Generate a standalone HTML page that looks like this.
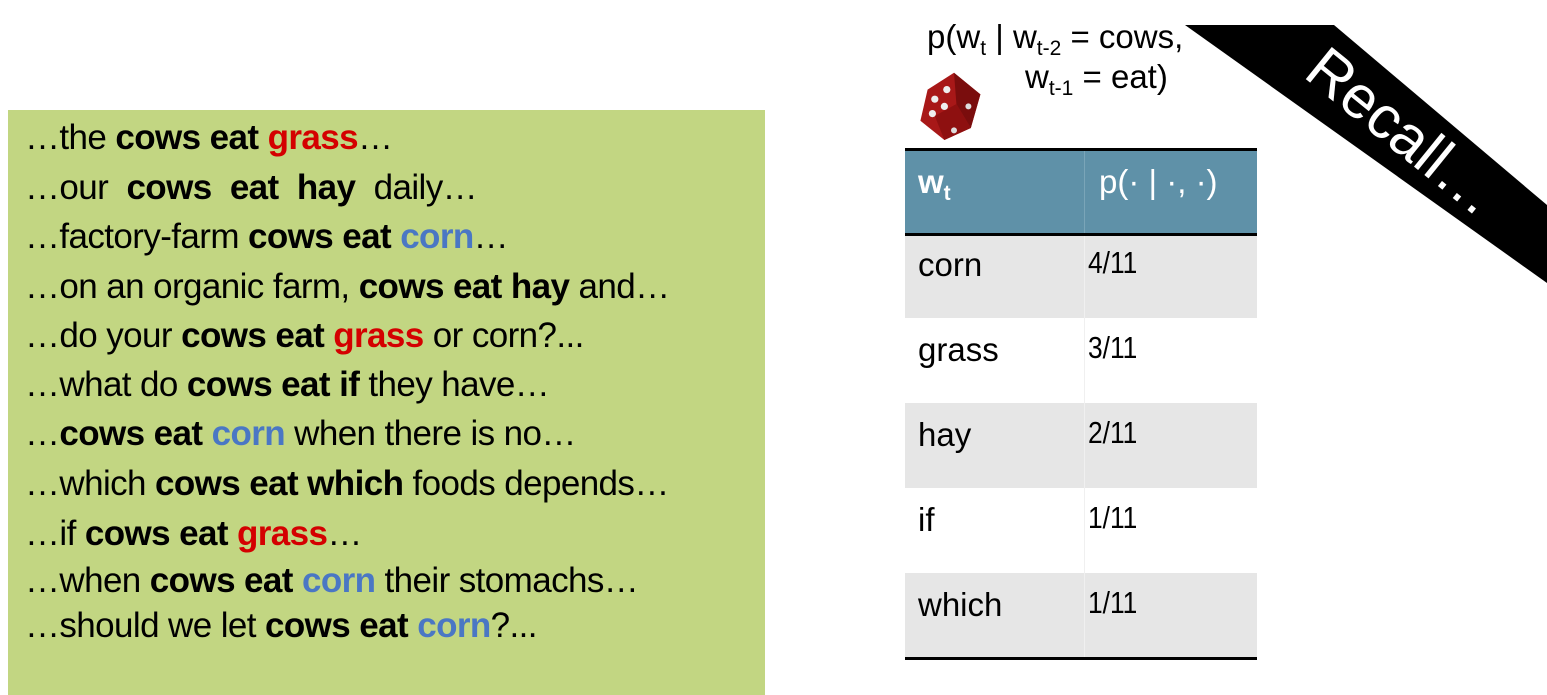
<!DOCTYPE html>
<html><head><meta charset="utf-8"><style>
body{margin:0;width:1547px;height:695px;background:#fff;position:relative;overflow:hidden;font-family:"Liberation Sans",sans-serif;}
.g{position:absolute;left:8px;top:110px;width:757px;height:585px;background:#c2d682;}
.l{position:absolute;left:25px;font-size:35px;letter-spacing:-0.6px;white-space:nowrap;line-height:40px;color:#000;}
b{font-weight:bold}
.r{color:#d40000}.bl{color:#4a77c4}
.t{position:absolute;font-size:33px;white-space:nowrap;line-height:38px;}
sub{font-size:21px;vertical-align:-7px;line-height:0}
.row{position:absolute;left:905px;width:352px;height:85px;}
.cell{position:absolute;font-size:33px;line-height:38px;}
.num{position:absolute;left:1088px;font-size:31px;line-height:36px;transform:scaleX(0.85);transform-origin:left;}
</style></head><body>
<div class="g"></div>
<div class="l" style="top:118px">…the <b>cows eat <span class="r">grass</span></b>…</div>
<div class="l" style="top:168px">…our &nbsp;<b>cows &nbsp;eat &nbsp;hay</b> &nbsp;daily…</div>
<div class="l" style="top:217px">…factory-farm <b>cows eat <span class="bl">corn</span></b>…</div>
<div class="l" style="top:267px">…on an organic farm, <b>cows eat hay</b> and…</div>
<div class="l" style="top:316px">…do your <b>cows eat <span class="r">grass</span></b> or corn?...</div>
<div class="l" style="top:365px">…what do <b>cows eat if</b> they have…</div>
<div class="l" style="top:414px">…<b>cows eat <span class="bl">corn</span></b> when there is no…</div>
<div class="l" style="top:464px">…which <b>cows eat which</b> foods depends…</div>
<div class="l" style="top:514px">…if <b>cows eat <span class="r">grass</span></b>…</div>
<div class="l" style="top:561px">…when <b>cows eat <span class="bl">corn</span></b> their stomachs…</div>
<div class="l" style="top:606px">…should we let <b>cows eat <span class="bl">corn</span></b>?...</div>

<div class="t" style="left:927px;top:18px">p(w<sub>t</sub> | w<sub>t-2</sub> = cows,</div>
<div class="t" style="left:1025px;top:58px">w<sub>t-1</sub> = eat)</div>

<svg style="position:absolute;left:0;top:0" width="1547" height="695">
<polygon points="1185,25 1334,25 1547,205 1547,283" fill="#000"/>
<text x="0" y="0" font-family="Liberation Sans" font-size="60" fill="#fff" transform="translate(1302,76) rotate(39)">Recall…</text>
<g transform="translate(918,68) scale(1.2)">
<polygon points="8,18 30,4 52,22 44,50 22,60 2,44" fill="#a81818"/>
<polygon points="30,4 52,22 44,50 32,30" fill="#7a0d0d"/>
<polygon points="22,60 44,50 32,30 14,40" fill="#8e1010"/>
<circle cx="14" cy="26" r="3" fill="#eee"/><circle cx="24" cy="18" r="3" fill="#eee"/>
<circle cx="12" cy="38" r="3" fill="#eee"/><circle cx="22" cy="32" r="3" fill="#eee"/>
<circle cx="42" cy="32" r="2.5" fill="#ddd"/><circle cx="30" cy="52" r="2.5" fill="#ddd"/>
</g>
</svg>

<div class="row" style="top:148px;height:85px;background:#5f91a8;border-top:3px solid #000;box-sizing:border-box"></div>
<div style="position:absolute;left:1084px;top:151px;width:1px;height:82px;background:#7aa5b8"></div>
<div class="cell" style="left:918px;top:163px;color:#fff;font-weight:bold">w<sub>t</sub></div>
<div class="cell" style="left:1099px;top:163px;color:#fff">p(· | ·, ·)</div>
<div class="row" style="top:233px;background:#e6e6e6;border-top:3px solid #000;box-sizing:border-box"></div>
<div class="row" style="top:318px;background:#fff"></div>
<div class="row" style="top:403px;background:#e6e6e6"></div>
<div class="row" style="top:488px;background:#fff"></div>
<div class="row" style="top:573px;background:#e6e6e6;height:84px"></div>
<div style="position:absolute;left:905px;top:657px;width:352px;height:3px;background:#000"></div>
<div style="position:absolute;left:1084px;top:236px;width:1px;height:421px;background:#f0f0f0"></div>
<div class="cell" style="left:918px;top:246px">corn</div><div class="num" style="top:245px">4/11</div>
<div class="cell" style="left:918px;top:331px">grass</div><div class="num" style="top:330px">3/11</div>
<div class="cell" style="left:918px;top:416px">hay</div><div class="num" style="top:415px">2/11</div>
<div class="cell" style="left:918px;top:501px">if</div><div class="num" style="top:500px">1/11</div>
<div class="cell" style="left:918px;top:586px">which</div><div class="num" style="top:585px">1/11</div>
</body></html>
